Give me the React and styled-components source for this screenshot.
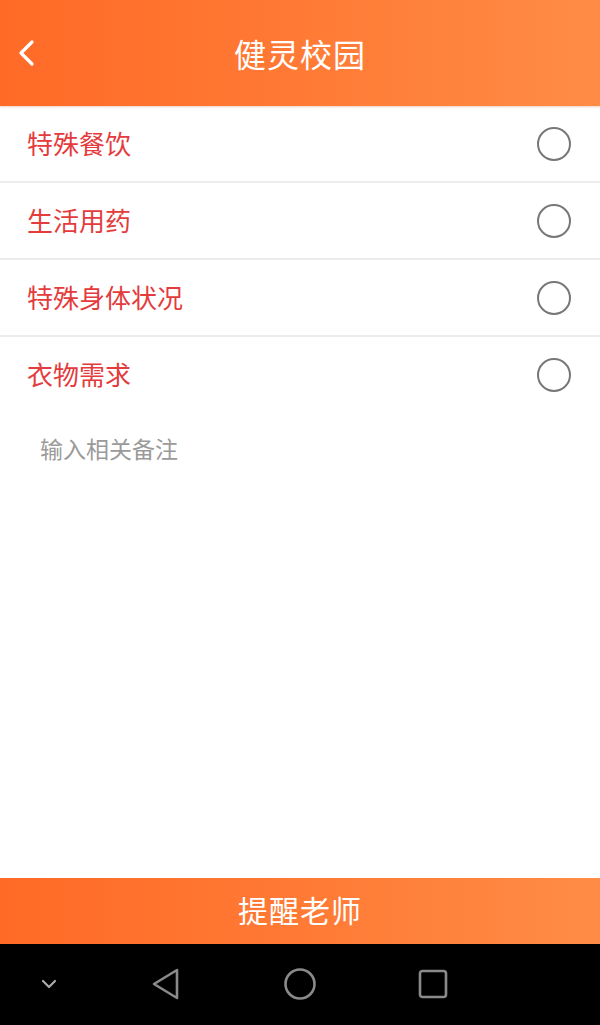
import React from "react";
import styled, { createGlobalStyle } from "styled-components";

const Global = createGlobalStyle`
  html, body { margin: 0; padding: 0; background: #fff; }
  body { font-family: "Noto Sans CJK SC", "Noto Sans", sans-serif; }
  * { box-sizing: border-box; }
`;

const Screen = styled.div`
  width: 600px;
  height: 1025px;
  display: flex;
  flex-direction: column;
  background: #fff;
  overflow: hidden;
`;

const orange = `linear-gradient(90deg, #ff6a27 0%, #ff7a35 50%, #ff8c45 100%)`;

const Header = styled.header`
  height: 106px;
  flex: none;
  background: ${orange};
  display: grid;
  grid-template-columns: 80px 1fr 80px;
  align-items: center;
  box-shadow: 0 1px 2px rgba(200, 120, 80, 0.35);
`;

const BackButton = styled.button`
  border: none;
  background: none;
  padding: 0 0 0 16px;
  height: 40px;
  display: flex;
  align-items: center;
  cursor: pointer;
`;

const Title = styled.h1`
  margin: 0;
  text-align: center;
  color: #fff;
  font-size: 32px;
  font-weight: 400;
  letter-spacing: 1px;
`;

const List = styled.ul`
  list-style: none;
  margin: 0;
  padding: 0;
  flex: none;
`;

const Row = styled.li`
  height: ${(p) => (p.$last ? "76px" : "77px")};
  display: flex;
  align-items: center;
  justify-content: space-between;
  padding: 0 29px 0 27px;
  border-bottom: ${(p) => (p.$last ? "none" : "2px solid #ececec")};
`;

const Label = styled.span`
  color: #e43b3d;
  font-size: 26px;
  line-height: 1;
  margin-top: -2px;
`;

const Radio = styled.span`
  width: 34px;
  height: 34px;
  border-radius: 50%;
  border: 2px solid #777;
  display: block;
`;

const Note = styled.textarea`
  flex: 1;
  border: none;
  outline: none;
  resize: none;
  padding: 20px 40px;
  font-family: "Noto Sans CJK SC", "Noto Sans", sans-serif;
  font-size: 23px;
  line-height: 30px;
  color: #333;
  background: #fff;
  &::placeholder { color: #9a9a9a; }
`;

const Submit = styled.button`
  flex: none;
  height: 66px;
  border: none;
  padding: 0 0 4px;
  background: ${orange};
  color: #fff;
  font-family: "Noto Sans CJK SC", "Noto Sans", sans-serif;
  font-size: 30px;
  font-weight: 400;
  letter-spacing: 1px;
  cursor: pointer;
`;

const NavBar = styled.nav`
  flex: none;
  height: 81px;
  background: #000;
  display: grid;
  grid-template-columns: 98px 136px 132px 134px 1fr;
  align-items: center;
`;

const NavSlot = styled.div`
  display: flex;
  justify-content: center;
  align-items: center;
  padding-bottom: 2px;
`;

const items = ["特殊餐饮", "生活用药", "特殊身体状况", "衣物需求"];

const stroke = "#8a8a8a";

export default function App() {
  return (
    <Screen>
      <Global />
      <Header>
        <BackButton aria-label="back">
          <svg width="22" height="28" viewBox="0 0 22 28">
            <polyline points="16,3 5,14 16,25" fill="none" stroke="#fff" strokeWidth="3.2" strokeLinecap="round" strokeLinejoin="round" />
          </svg>
        </BackButton>
        <Title>健灵校园</Title>
        <div />
      </Header>
      <List>
        {items.map((t, i) => (
          <Row key={t} $last={i === items.length - 1}>
            <Label>{t}</Label>
            <Radio />
          </Row>
        ))}
      </List>
      <Note placeholder="输入相关备注" />
      <Submit>提醒老师</Submit>
      <NavBar>
        <NavSlot>
          <svg width="16" height="10" viewBox="0 0 16 10">
            <polyline points="2,2 8,8 14,2" fill="none" stroke="#aaa" strokeWidth="2.2" strokeLinecap="round" strokeLinejoin="round" />
          </svg>
        </NavSlot>
        <NavSlot>
          <svg width="30" height="32" viewBox="0 0 30 32">
            <polygon points="26,2 26,30 3,16" fill="none" stroke={stroke} strokeWidth="2.6" strokeLinejoin="round" />
          </svg>
        </NavSlot>
        <NavSlot>
          <svg width="34" height="34" viewBox="0 0 34 34">
            <circle cx="17" cy="17" r="14.5" fill="none" stroke={stroke} strokeWidth="2.6" />
          </svg>
        </NavSlot>
        <NavSlot>
          <svg width="30" height="30" viewBox="0 0 30 30">
            <rect x="2" y="2" width="26" height="26" rx="2.5" fill="none" stroke={stroke} strokeWidth="2.6" />
          </svg>
        </NavSlot>
        <div />
      </NavBar>
    </Screen>
  );
}
